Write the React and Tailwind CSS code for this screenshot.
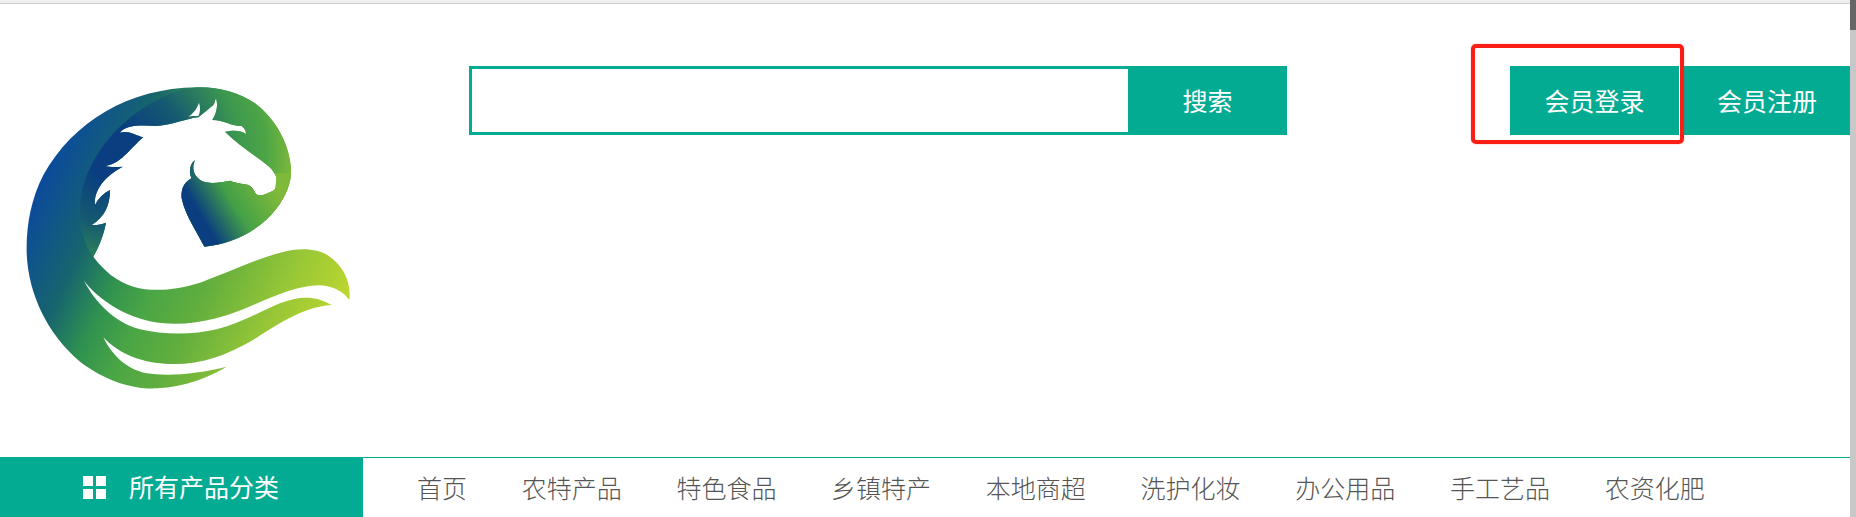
const cjk = { fontFamily: '"Noto Sans CJK SC", "Noto Sans", sans-serif' };

const navItems = ["首页", "农特产品", "特色食品", "乡镇特产", "本地商超", "洗护化妆", "办公用品", "手工艺品", "农资化肥"];

// silhouette of the logo, horse head is cut out of it
const silhouette =
  "M590 82 C385 85 220 185 130 345 C92 420 78 500 80 580 C85 700 140 820 240 905 C320 965 400 988 470 985 C560 980 630 950 680 920 C600 940 510 950 440 940 C380 928 335 885 310 832 C360 885 430 910 510 912 C600 915 680 885 750 845 C810 810 900 740 995 735 C950 708 900 705 840 730 C780 755 720 790 650 808 C580 825 490 825 420 808 C340 785 285 725 252 662 C300 725 390 780 490 790 C590 798 680 770 760 735 C830 705 900 675 960 676 C1000 678 1030 695 1048 720 C1055 670 1030 615 985 587 C950 565 900 562 840 578 C760 600 680 640 600 668 C530 690 460 697 400 680 C350 665 310 630 280 590 C300 555 312 520 318 488 C305 492 290 496 275 495 C315 470 330 435 330 390 C310 400 295 415 285 435 C280 395 310 350 368 320 C350 322 330 322 315 318 C360 315 390 265 430 232 C405 225 385 210 360 218 C375 195 420 195 470 198 C520 195 560 175 595 172 C610 160 625 148 640 135 C645 128 645 120 648 115 C655 135 650 160 637 180 C675 180 695 200 725 198 C735 205 738 215 738 222 C720 208 695 212 675 215 C715 255 770 290 805 318 C820 332 830 348 830 358 C825 370 832 385 820 392 C805 398 790 408 775 406 C760 400 765 385 745 375 C725 370 705 370 692 362 C660 368 625 375 600 360 C580 345 575 325 585 300 C570 310 565 335 575 355 C555 365 542 385 545 415 C555 465 590 515 613 560 C700 552 780 510 830 445 C860 405 875 365 873 325 C868 250 825 175 765 130 C715 95 650 80 590 82 Z";

function Logo() {
  return (
    <svg width="380" height="350" viewBox="0 0 1140 1050" className="block">
      <defs>
        <clipPath id="logoClip">
          <path d={silhouette} />
        </clipPath>
        <linearGradient id="bodyGrad" gradientUnits="userSpaceOnUse" x1="150" y1="300" x2="1040" y2="720">
          <stop offset="0" stopColor="#0b4a9c" />
          <stop offset="0.2" stopColor="#16646e" />
          <stop offset="0.33" stopColor="#2f9150" />
          <stop offset="0.45" stopColor="#4aa545" />
          <stop offset="0.6" stopColor="#62ae3e" />
          <stop offset="0.8" stopColor="#94c537" />
          <stop offset="1" stopColor="#bcd72f" />
        </linearGradient>
        <radialGradient id="headGrad" gradientUnits="userSpaceOnUse" cx="340" cy="280" r="540">
          <stop offset="0.15" stopColor="#0a3e80" />
          <stop offset="0.4" stopColor="#155a70" />
          <stop offset="0.7" stopColor="#3c984e" />
          <stop offset="0.85" stopColor="#4ea546" />
          <stop offset="1" stopColor="#7eb93a" />
        </radialGradient>
        <linearGradient id="jawGrad" gradientUnits="userSpaceOnUse" x1="610" y1="530" x2="830" y2="400">
          <stop offset="0.1" stopColor="#0a3e80" />
          <stop offset="0.5" stopColor="#43a047" />
          <stop offset="1" stopColor="#7eb93a" />
        </linearGradient>
      </defs>
      <path d={silhouette} fill="url(#bodyGrad)" />
      <g clipPath="url(#logoClip)">
        <path d="M590 82 C430 100 240 270 240 450 C240 510 255 560 280 590 L613 575 L900 520 L900 50 Z" fill="url(#headGrad)" />
        <path d="M530 340 L900 340 L900 520 L613 575 L530 575 Z" fill="url(#jawGrad)" />
      </g>
      <path d="M565 170 C580 160 592 145 597 128 C602 145 600 158 595 168 C585 168 575 168 565 170 Z" fill="#fff" />
    </svg>
  );
}

export default function App() {
  return (
    <div className="relative flex h-[517px] w-full overflow-hidden bg-white" style={cjk}>
      <div className="flex min-w-0 flex-1 flex-col">
        <div className="h-[4px] border-b border-[#cfcfcf] bg-[#eeeeee]" />

        {/* header */}
        <div className="flex h-[453px] items-start">
          <div className="mt-[56px] w-[469px] shrink-0">
            <Logo />
          </div>
          <div className="mt-[62px] flex h-[69px] w-[818px] shrink-0">
            <div className="flex-1 border-[3px] border-r-0 border-[#04ab93]" />
            <button className="w-[159px] bg-[#04ab93] text-[25px] text-white">搜索</button>
          </div>
          <div className="ml-[223px] mt-[62px] flex h-[69px] flex-1">
            <button className="w-[169px] bg-[#04ab93] text-[25px] text-white">会员登录</button>
            <div className="w-[1px]" />
            <button className="flex-1 bg-[#04ab93] pl-[4px] text-[25px] text-white">会员注册</button>
          </div>
        </div>

        {/* nav bar */}
        <div className="flex flex-1 border-t border-[#04ab93]">
          <div className="-mt-px flex w-[363px] items-center gap-[23px] bg-[#04ab93] pl-[83px] text-[25px] text-white">
            <div className="grid h-[23px] w-[23px] grid-cols-2 gap-[3px]">
              <span className="bg-white" />
              <span className="bg-white" />
              <span className="bg-white" />
              <span className="bg-white" />
            </div>
            所有产品分类
          </div>
          <nav className="flex items-center gap-[54.7px] pl-[54px] text-[25px] font-light text-[#555]">
            {navItems.map((item) => (
              <a key={item}>{item}</a>
            ))}
          </nav>
        </div>
      </div>

      {/* scrollbar */}
      <div className="w-[6px] shrink-0 bg-[#c8c8c8]">
        <div className="h-[30px] bg-[#666666]" />
      </div>

      {/* red annotation box */}
      <div className="absolute left-[1471px] top-[44px] h-[100px] w-[213px] rounded-[5px] border-[4px] border-[#fa1e14] shadow-[0_0_1px_#fa1e14]" />
    </div>
  );
}
